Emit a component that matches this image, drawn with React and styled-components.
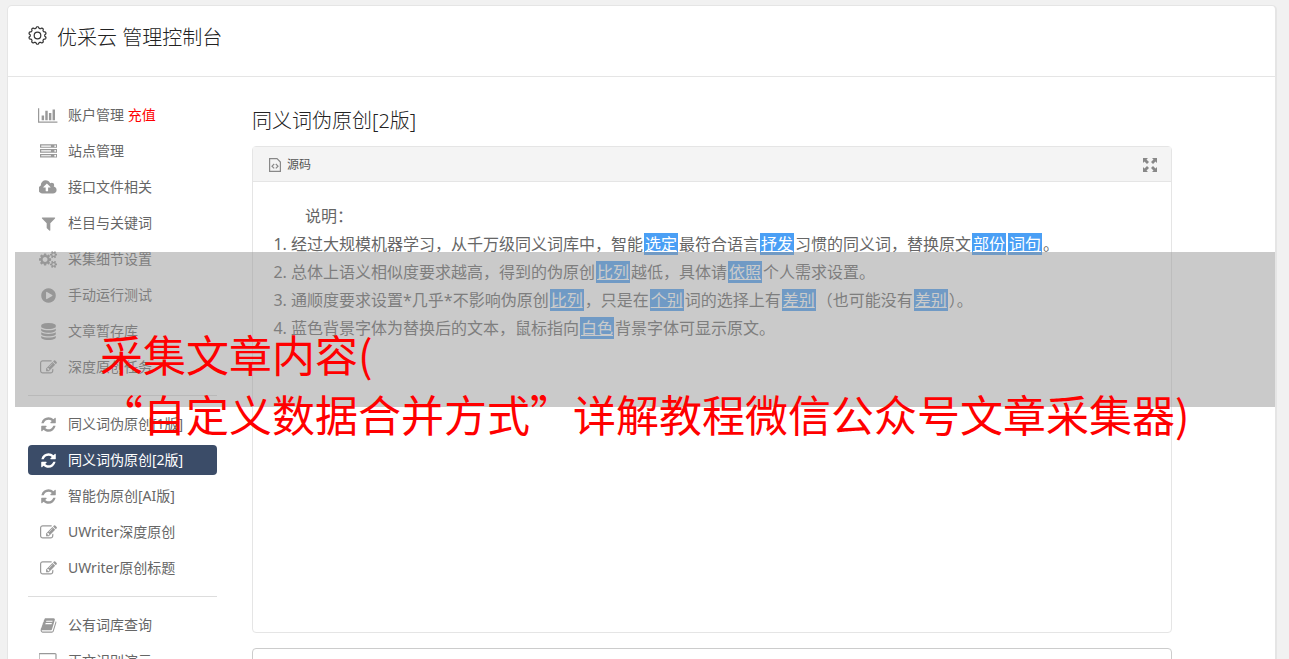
import React from "react";
import styled, { createGlobalStyle, css } from "styled-components";

const icons = {
  chart: { w: 2048, d: "M640 896v512h-256v-512h256zm384-512v1024h-256v-1024h256zm1024 1152v128h-2048v-1536h128v1408h1920zm-640-896v768h-256v-768h256zm384-384v1152h-256v-1152h256z" },
  server: { w: 1792, d: "M128 1408h1024v-128h-1024v128zm0-512h1024v-128h-1024v128zm1568 448q0-40-28-68t-68-28-68 28-28 68 28 68 68 28 68-28 28-68zm-1568-960h1024v-128h-1024v128zm1568 448q0-40-28-68t-68-28-68 28-28 68 28 68 68 28 68-28 28-68zm0-512q0-40-28-68t-68-28-68 28-28 68 28 68 68 28 68-28 28-68zm96 832v384h-1792v-384h1792zm0-512v384h-1792v-384h1792zm0-512v384h-1792v-384h1792z" },
  cloud: { w: 1856, d: "M1216 864q0-14-9-23l-352-352q-9-9-23-9t-23 9l-351 351q-10 12-10 24 0 14 9 23t23 9h224v352q0 13 9.5 22.5t22.5 9.5h192q13 0 22.5-9.5t9.5-22.5v-352h224q13 0 22.5-9.5t9.5-22.5zm640 288q0 159-112.5 271.5t-271.5 112.5h-1088q-185 0-316.5-131.5t-131.5-316.5q0-130 70-240t188-165q-2-30-2-43 0-212 150-362t362-150q156 0 285.5 87t188.5 231q71-62 166-62 106 0 181 75t75 181q0 76-41 138 130 31 213.5 135.5t83.5 238.5z" },
  filter: { w: 1792, d: "M1595 295q17 41-14 70l-493 493v742q0 42-39 59-13 5-25 5-27 0-45-19l-256-256q-19-19-19-45v-486l-493-493q-31-29-14-70 17-39 59-39h1280q42 0 59 39z" },
  cogs: { w: 1920, d: "M896 896q0-106-75-181t-181-75-181 75-75 181 75 181 181 75 181-75 75-181zm768 512q0-52-38-90t-90-38-90 38-38 90q0 53 37.5 90.5t90.5 37.5 90.5-37.5 37.5-90.5zm0-1024q0-52-38-90t-90-38-90 38-38 90q0 53 37.5 90.5t90.5 37.5 90.5-37.5 37.5-90.5zm-384 421v185q0 10-7 19.5t-16 10.5l-155 24q-11 35-32 76 34 48 90 115 7 11 7 20 0 12-7 19-23 30-82.5 89.5t-78.5 59.5q-11 0-21-7l-115-90q-37 19-77 31-11 108-23 155-7 24-30 24h-186q-11 0-20-7.5t-10-17.5l-23-153q-34-10-75-31l-118 89q-7 7-20 7-11 0-21-8-144-133-144-160 0-9 7-19 10-14 41-53t47-61q-23-44-35-82l-152-24q-10-1-17-9.5t-7-19.5v-185q0-10 7-19.5t16-10.5l155-24q11-35 32-76-34-48-90-115-7-11-7-20 0-12 7-20 22-30 82-89t79-59q11 0 21 7l115 90q34-18 77-32 11-108 23-154 7-24 30-24h186q11 0 20 7.5t10 17.5l23 153q34 10 75 31l118-89q8-7 20-7 11 0 21 8 144 133 144 160 0 8-7 19-12 16-42 54t-45 60q23 48 34 82l152 23q10 2 17 10.5t7 19.5zm640 533v140q0 16-149 31-12 27-30 52 51 113 51 138 0 4-4 7-122 71-124 71-8 0-46-47t-52-68q-20 2-30 2t-30-2q-14 21-52 68t-46 47q-2 0-124-71-4-3-4-7 0-25 51-138-18-25-30-52-149-15-149-31v-140q0-16 149-31 13-29 30-52-51-113-51-138 0-4 4-7 4-2 35-20t59-34 30-16q8 0 46 46.5t52 67.5q20-2 30-2t30 2q51-71 92-112l6-2q4 0 124 70 4 3 4 7 0 25-51 138 17 23 30 52 149 15 149 31zm0-1024v140q0 16-149 31-12 27-30 52 51 113 51 138 0 4-4 7-122 71-124 71-8 0-46-47t-52-68q-20 2-30 2t-30-2q-14 21-52 68t-46 47q-2 0-124-71-4-3-4-7 0-25 51-138-18-25-30-52-149-15-149-31v-140q0-16 149-31 13-29 30-52-51-113-51-138 0-4 4-7 4-2 35-20t59-34 30-16q8 0 46 46.5t52 67.5q20-2 30-2t30 2q51-71 92-112l6-2q4 0 124 70 4 3 4 7 0 25-51 138 17 23 30 52 149 15 149 31z" },
  play: { w: 1792, d: "M896 128q209 0 385.5 103t279.5 279.5 103 385.5-103 385.5-279.5 279.5-385.5 103-385.5-103-279.5-279.5-103-385.5 103-385.5 279.5-279.5 385.5-103zm384 823q32-18 32-55t-32-55l-544-320q-31-19-64-1-32 19-32 56v640q0 37 32 56 16 8 32 8 17 0 32-9z" },
  database: { w: 1792, d: "M896 768q237 0 443-43t325-127v170q0 69-103 128t-280 93.5-385 34.5-385-34.5-280-93.5-103-128v-170q119 84 325 127t443 43zm0 768q237 0 443-43t325-127v170q0 69-103 128t-280 93.5-385 34.5-385-34.5-280-93.5-103-128v-170q119 84 325 127t443 43zm0-384q237 0 443-43t325-127v170q0 69-103 128t-280 93.5-385 34.5-385-34.5-280-93.5-103-128v-170q119 84 325 127t443 43zm0-1152q208 0 385 34.5t280 93.5 103 128v128q0 69-103 128t-280 93.5-385 34.5-385-34.5-280-93.5-103-128v-128q0-69 103-128t280-93.5 385-34.5z" },
  edit: { w: 1792, d: "M888 1184l116-116-152-152-116 116v56h96v96h56zm440-720q-16-16-33 1l-350 350q-17 17-1 33t33-1l350-350q17-17 1-33zm80 594v190q0 119-84.5 203.5t-203.5 84.5h-832q-119 0-203.5-84.5t-84.5-203.5v-832q0-119 84.5-203.5t203.5-84.5h832q63 0 117 25 15 7 18 23 3 17-9 29l-49 49q-14 14-32 8-23-6-45-6h-832q-66 0-113 47t-47 113v832q0 66 47 113t113 47h832q66 0 113-47t47-113v-126q0-13 9-22l64-64q15-15 35-7t20 29zm-96-738l288 288-672 672h-288v-288zm444 132l-92 92-288-288 92-92q28-28 68-28t68 28l152 152q28 28 28 68t-28 68z" },
  refresh: { w: 1792, d: "M1639 1056q0 5-1 7-64 268-268 434.5t-478 166.5q-146 0-282.5-55t-243.5-157l-129 129q-19 19-45 19t-45-19-19-45v-448q0-26 19-45t45-19h448q26 0 45 19t19 45-19 45l-137 137q71 66 161 102t187 36q134 0 250-65t186-179q11-17 53-117 8-23 30-23h192q13 0 22.5 9.5t9.5 22.5zm25-800v448q0 26-19 45t-45 19h-448q-26 0-45-19t-19-45 19-45l138-138q-148-137-349-137-134 0-250 65t-186 179q-11 17-53 117-8 23-30 23h-199q-13 0-22.5-9.5t-9.5-22.5v-7q65-268 270-434.5t480-166.5q146 0 284 55.5t245 156.5l130-129q19-19 45-19t45 19 19 45z" },
  book: { w: 1792, d: "M1703 478q40 57 18 129l-275 906q-19 64-76.5 107.5t-122.5 43.5h-923q-77 0-148.5-53.5t-99.5-131.5q-24-67-2-127 0-4 3-27t4-37q1-8-3-21.5t-3-19.5q2-11 8-21t16.5-23.5 16.5-23.5q23-38 45-91.5t30-91.5q3-10 .5-30t-.5-28q3-11 17-28t17-23q21-36 42-92t25-90q1-9-2.5-32t.5-28q4-13 22-30.5t22-22.5q19-26 42.5-84.5t27.5-96.5q1-8-3-25.5t-2-26.5q2-8 9-18t18-23 17-21q8-12 16.5-30.5t15-35 16-36 19.5-32 26.5-23.5 36-11.5 47.5 5.5l-1 3q38-9 51-9h761q74 0 114 56t18 130l-274 906q-36 119-71.5 153.5t-128.5 34.5h-869q-27 0-38 15-11 16-1 43 24 70 144 70h923q29 0 56-15.5t35-41.5l300-987q7-22 5-57 38 15 59 43zm-1064 2q-4 13 2 22.5t20 9.5h608q13 0 25.5-9.5t16.5-22.5l21-64q4-13-2-22.5t-20-9.5h-608q-13 0-25.5 9.5t-16.5 22.5zm-83 256q-4 13 2 22.5t20 9.5h608q13 0 25.5-9.5t16.5-22.5l21-64q4-13-2-22.5t-20-9.5h-608q-13 0-25.5 9.5t-16.5 22.5z" },
  desktop: { w: 1920, d: "M1728 992v-832q0-13-9.500-22.500t-22.500-9.500h-1600q-13 0-22.500 9.500t-9.500 22.500v832q0 13 9.500 22.500t22.500 9.500h1600q13 0 22.500-9.500t9.500-22.500zm128-832v1088q0 66-47 113t-113 47h-544q0 37 16 77.500t32 71 16 43.500q0 26-19 45t-45 19h-512q-26 0-45-19t-19-45q0-14 16-44t32-70 16-78h-544q-66 0-113-47t-47-113v-1088q0-66 47-113t113-47h1600q66 0 113 47t47 113z" },
};

const menu = [
  [
    { icon: "chart", text: "账户管理", extra: "充值" },
    { icon: "server", text: "站点管理" },
    { icon: "cloud", text: "接口文件相关" },
    { icon: "filter", text: "栏目与关键词" },
    { icon: "cogs", text: "采集细节设置" },
    { icon: "play", text: "手动运行测试" },
    { icon: "database", text: "文章暂存库" },
    { icon: "edit", text: "深度原创任务" },
  ],
  [
    { icon: "refresh", text: "同义词伪原创[1版]" },
    { icon: "refresh", text: "同义词伪原创[2版]", active: true },
    { icon: "refresh", text: "智能伪原创[AI版]" },
    { icon: "edit", text: "UWriter深度原创" },
    { icon: "edit", text: "UWriter原创标题" },
  ],
  [
    { icon: "book", text: "公有词库查询" },
    { icon: "desktop", text: "正文识别演示" },
  ],
];

const MenuIcon = ({ name, active }) => (
  <IconBox $active={active}>
    <svg height="17" viewBox={`0 0 ${icons[name].w} 1792`} fill="currentColor" aria-hidden="true">
      <path d={icons[name].d} />
    </svg>
  </IconBox>
);

// gear outline: a ring with ten soft teeth
const gearPoints = Array.from({ length: 120 }, (_, i) => {
  const a = (i / 120) * Math.PI * 2;
  const r = 8 + 0.8 * Math.tanh(2 * Math.cos(10 * a));
  return `${(9.5 + r * Math.sin(a)).toFixed(2)},${(9.5 - r * Math.cos(a)).toFixed(2)}`;
}).join(" ");

const GearIcon = () => (
  <svg width="19" height="19" viewBox="0 0 19 19" fill="none" stroke="#333" strokeWidth="1.2" aria-hidden="true">
    <polygon points={gearPoints} strokeLinejoin="round" />
    <circle cx="9.5" cy="9.5" r="3.3" />
  </svg>
);

const SourceIcon = () => (
  <svg width="12" height="14" viewBox="0 0 12 14" fill="none" stroke="#888" strokeWidth="1.2" aria-hidden="true">
    <path d="M.6.6h7.400l3.400 3.400v9.400H.6z" />
    <path d="M5.200 6L3 8.200l2.200 2.200M6.800 6L9 8.200l-2.200 2.200" />
  </svg>
);

const ExpandIcon = () => (
  <svg width="14" height="14" viewBox="0 0 14 14" fill="#888" aria-hidden="true">
    <path d="M0 0h5L3.500 1.500 6 4 4 6 1.500 3.500 0 5zM14 0v5l-1.500-1.500L10 6 8 4l2.500-2.500L9 0zM0 14V9l1.500 1.500L4 8l2 2-2.500 2.500L5 14zM14 14H9l1.500-1.500L8 10l2-2 2.500 2.500L14 9z" />
  </svg>
);

const App = () => {
  return (
    <>
      <GlobalStyle />
      <Card>
        <Header>
          <GearIcon />
          <Brand>优采云 管理控制台</Brand>
        </Header>

        <Body>
          <Sidebar>
            {menu.map((group, i) => (
              <Group key={i}>
                {group.map((item) => (
                  <Item key={item.text} href="#" $active={item.active}>
                    <MenuIcon name={item.icon} active={item.active} />
                    <span>
                      {item.text}
                      {item.extra ? <Recharge> {item.extra}</Recharge> : null}
                    </span>
                  </Item>
                ))}
              </Group>
            ))}
          </Sidebar>

          <Content>
            <PageTitle>同义词伪原创[2版]</PageTitle>
            <Editor>
              <Toolbar>
                <ToolButton>
                  <SourceIcon />
                  源码
                </ToolButton>
                <ToolButton aria-label="全屏">
                  <ExpandIcon />
                </ToolButton>
              </Toolbar>
              <EditArea>
                <Intro>说明：</Intro>
                <Notes>
                  <li>经过大规模机器学习，从千万级同义词库中，智能<Word>选定</Word>最符合语言<Word>抒发</Word>习惯的同义词，替换原文<Word>部份</Word><Word>词句</Word>。</li>
                  <li>总体上语义相似度要求越高，得到的伪原创<Word>比列</Word>越低，具体请<Word>依照</Word>个人需求设置。</li>
                  <li>通顺度要求设置*几乎*不影响伪原创<Word>比列</Word>，只是在<Word>个别</Word>词的选择上有<Word>差别</Word>（也可能没有<Word>差别</Word>）。</li>
                  <li>蓝色背景字体为替换后的文本，鼠标指向<Word>白色</Word>背景字体可显示原文。</li>
                </Notes>
              </EditArea>
            </Editor>
            <NextBox />
          </Content>
        </Body>
      </Card>

      <Banner>
        <BannerText>
          采集文章内容(
          <br />
          “自定义数据合并方式”详解教程微信公众号文章采集器)
        </BannerText>
      </Banner>
    </>
  )
}

export default App;

const GlobalStyle = createGlobalStyle`
  * {
    box-sizing: border-box;
  }
  html {
    height: 100%;
    overflow: hidden;
  }
  body {
    height: 100%;
    margin: 0;
    overflow: hidden;
    background: #f1f1f1;
    color: #666;
    font-family: "Noto Sans", "Noto Sans CJK SC", sans-serif;
    font-size: 14px;
  }
`;

const Card = styled.div`
  margin: 5px 12px 0 7px;
  border: 1px solid #e5e5e5;
  border-right-width: 2px;
  border-radius: 5px;
  background: white;
`;

const Header = styled.header`
  height: 71px;
  padding: 20px 20px 0;
  display: flex;
  align-items: flex-start;
  gap: 10px;
  border-bottom: 1px solid #e5e5e5;
`;

const Brand = styled.h1`
  margin: 0;
  font-size: 20px;
  line-height: 24px;
  font-weight: 300;
  color: #222;
`;

const Body = styled.div`
  display: flex;
  gap: 35px;
  padding: 23px 20px 0;
`;

const Sidebar = styled.nav`
  flex: 0 0 189px;
`;

const Group = styled.div`
  display: flex;
  flex-direction: column;
  gap: 6px;

  & + & {
    margin-top: 13px;
    padding-top: 13px;
    border-top: 1px solid #ddd;
  }
`;

const Item = styled.a`
  display: flex;
  align-items: center;
  gap: 10px;
  height: 30px;
  padding: 0 10px;
  border-radius: 4px;
  line-height: 30px;
  color: #666;
  text-decoration: none;
  white-space: nowrap;
  ${({ $active }) => $active && css`
    background: #3b4c68;
    color: white;
  `}
`;

const IconBox = styled.span`
  display: flex;
  justify-content: center;
  flex: 0 0 20px;
  color: ${({ $active }) => ($active ? "white" : "#999")};
`;

const Recharge = styled.span`
  color: red;
`;

const Content = styled.main`
  flex: 1;
  max-width: 920px;
`;

const PageTitle = styled.h2`
  margin: 7px 0 11px;
  font-size: 20px;
  line-height: 28px;
  font-weight: 300;
  color: #222;
`;

const Editor = styled.section`
  border: 1px solid #e5e5e5;
  border-radius: 4px;
`;

const Toolbar = styled.div`
  display: flex;
  align-items: center;
  justify-content: space-between;
  height: 35px;
  padding: 2px 14px 0 16px;
  border-bottom: 1px solid #e5e5e5;
  background: #f4f4f4;
`;

const ToolButton = styled.button`
  display: flex;
  align-items: center;
  gap: 6px;
  padding: 0;
  border: 0;
  background: none;
  color: #555;
  font: inherit;
  font-size: 12px;
  line-height: 16px;
`;

const EditArea = styled.div`
  min-height: 450px;
  padding: 20px;
  font-size: 16px;
  line-height: 28px;
`;

const Intro = styled.p`
  margin: 0;
  text-indent: 2em;
`;

const Notes = styled.ol`
  margin: 0;
  padding-left: 18px;
`;

const Word = styled.span`
  margin: 0 1px;
  padding: 0 1px;
  background: #4a9ff5;
  color: white;
  text-decoration: underline;
`;

const NextBox = styled.div`
  height: 60px;
  margin-top: 15px;
  border: 1px solid #ccc;
  border-radius: 4px;
`;

const Banner = styled.div`
  position: absolute;
  top: 252px;
  left: 15px;
  right: 14px;
  height: 155px;
  padding: 71px 85px 0;
  background: rgba(150, 150, 150, 0.5);
  pointer-events: none;
`;

const BannerText = styled.p`
  margin: 0;
  color: red;
  font-family: "Noto Sans CJK SC", sans-serif;
  font-size: 43px;
  line-height: 60px;
  white-space: nowrap;
`;
